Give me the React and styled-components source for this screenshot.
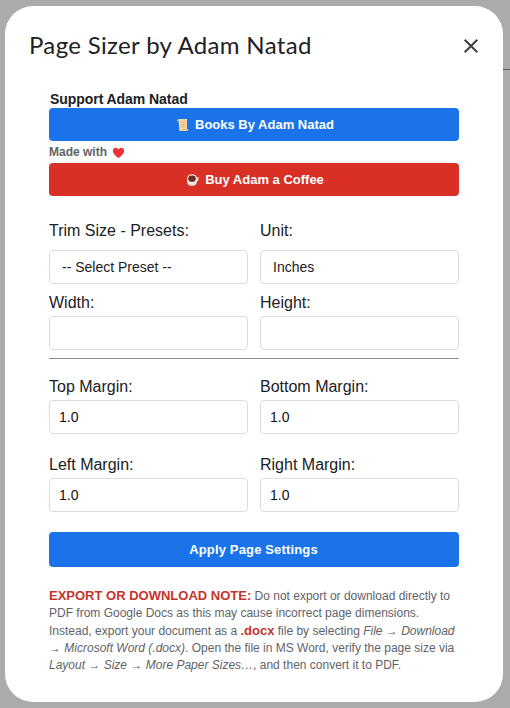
import React from 'react';
import styled, { createGlobalStyle } from 'styled-components';

const GlobalStyle = createGlobalStyle`
  * { box-sizing: border-box; }
  body { margin: 0; background: #ababab; font-family: "Liberation Sans", Arial, sans-serif; }
`;

const Backdrop = styled.div`
  width: 510px;
  height: 708px;
  padding: 6px 7px 6px 5px;
  overflow: hidden;
  background: linear-gradient(#5e5e5e, #5e5e5e) 503px 69px / 7px 1px no-repeat #ababab;
`;

const Dialog = styled.main`
  width: 498px;
  height: 696px;
  border-radius: 28px;
  background: #fff;
  color: #202124;
`;

const Header = styled.header`
  display: flex;
  align-items: center;
  justify-content: space-between;
  height: 80px;
  padding: 0 22px 0 24px;
`;

const Title = styled.h1`
  margin: 0;
  padding-bottom: 2px;
  font: 400 24px/32px Lato, sans-serif;
  letter-spacing: 0.34px;
  white-space: nowrap;
`;

const CloseButton = styled.button`
  display: flex;
  padding: 0;
  border: 0;
  background: none;
  color: #3c4043;
`;

const Content = styled.div`
  width: 410px;
  margin-left: 44px;
`;

const Support = styled.h2`
  margin: 0;
  height: 22px;
  padding: 5px 0 0 1px;
  font-size: 14px;
  line-height: 16px;
  letter-spacing: -0.06px;
`;

const Button = styled.button`
  display: flex;
  align-items: center;
  justify-content: center;
  gap: 6px;
  width: 100%;
  height: ${(p) => p.$height || 33}px;
  padding: ${(p) => (p.$height ? '1px 1px 0 0' : '1px 0 0 2px')};
  border: 0;
  border-radius: 4px;
  background: ${(p) => (p.$danger ? '#d93025' : '#1a73e8')};
  color: #fff;
  font: 700 13px/16px "Liberation Sans", Arial, sans-serif;
  letter-spacing: ${(p) => p.$spacing || 0}px;
`;

const MadeWith = styled.div`
  display: flex;
  align-items: center;
  gap: 5px;
  height: 22px;
  color: #5f6368;
  font-size: 12px;
  font-weight: 700;
`;

const FieldGrid = styled.div`
  display: grid;
  grid-template-columns: 199px 199px;
  column-gap: 12px;
  row-gap: ${(p) => p.$gap}px;
  margin-top: ${(p) => p.$top}px;
`;

const Field = styled.label`
  display: flex;
  flex-direction: column;
  gap: ${(p) => p.$gap || 3}px;
`;

const Label = styled.span`
  height: 20px;
  font-size: 16px;
  line-height: 20px;
  white-space: nowrap;
`;

const control = `
  width: 100%;
  height: 34px;
  margin: 0;
  border: 1px solid #dadce0;
  border-radius: 4px;
  background: #fff;
  font: 14px/16px "Liberation Sans", Arial, sans-serif;
`;

const Input = styled.input`
  ${control}
  padding: 0 8px 0 9px;
  color: #111;
`;

const Select = styled.select`
  ${control}
  appearance: none;
  padding: 0 12px;
  color: #202124;
`;

const Divider = styled.hr`
  height: 1px;
  margin: 8px 0 0;
  border: 0;
  background: #8b8b8b;
`;

const ApplyRow = styled.div`
  margin-top: 20px;
`;

const Note = styled.p`
  margin: 21px 0 0;
  color: #5f6368;
  font-size: 12px;
  line-height: 17px;
`;

const Line = styled.span`
  display: block;
  height: 17.25px;
  white-space: nowrap;
`;

const Strong = styled.strong`
  color: #c5352b;
  font-size: 13px;
  line-height: 0;
`;

const CloseIcon = () => (
  <svg width="20" height="20" viewBox="0 0 20 20" fill="none" stroke="currentColor" strokeWidth="2">
    <path d="M3.7 3.7l12.6 12.6M16.3 3.7l-12.6 12.6" />
  </svg>
);

const ScrollIcon = () => (
  <svg width="13" height="14" viewBox="0 0 13 14">
    <path d="M2.5 1h8.5v11.5H3.2z" fill="#fbd9ab" />
    <path d="M.8 2.4C.8.7 3.2.7 3.2 2.4v.8H.8z" fill="#dcb285" />
    <path d="M3 11h9.200c.3 1.300-.3 2-1.400 2H4c-.8 0-1-.8-1-2z" fill="#efc48e" />
    <path d="M4.500 4h4.800M4.500 6.300h4.800M4.500 8.600h4.800" stroke="#e0a565" strokeWidth="0.9" />
  </svg>
);

const CoffeeIcon = () => (
  <svg width="13" height="14" viewBox="0 0 13 14">
    <path d="M10.300 4.500c2.600-.8 2.400 3.500-.7 4.200" fill="none" stroke="#eed9d6" strokeWidth="1.3" />
    <ellipse cx="6" cy="9.8" rx="5" ry="3.3" fill="#d8aaa6" />
    <path d="M1 5.800c0 4 1.700 6.500 5 6.500s5-2.500 5-6.500z" fill="#f4e4e1" />
    <ellipse cx="6" cy="5.8" rx="5" ry="4.6" fill="#f6e9e5" />
    <ellipse cx="6" cy="5.7" rx="3.8" ry="3.1" fill="#5f2f25" />
  </svg>
);

const HeartIcon = () => (
  <svg width="13" height="13" viewBox="0 0 14 13">
    <path d="M7 12.500C4.800 11 .9 7.700.9 4.600.9 1 5.400.4 7 3.200 8.600.4 13.100 1 13.100 4.600 13.100 7.700 9.200 11 7 12.500z" fill="#ee3037" />
  </svg>
);

const margins = ['Top Margin:', 'Bottom Margin:', 'Left Margin:', 'Right Margin:'];

export default function App() {
  return (
    <Backdrop>
      <GlobalStyle />
      <Dialog>
        <Header>
          <Title>Page Sizer by Adam Natad</Title>
          <CloseButton aria-label="Close"><CloseIcon /></CloseButton>
        </Header>
        <Content>
          <Support>Support Adam Natad</Support>
          <Button><ScrollIcon />Books By Adam Natad</Button>
          <MadeWith>Made with <HeartIcon /></MadeWith>
          <Button $danger><CoffeeIcon />Buy Adam a Coffee</Button>
          <FieldGrid $top={25} $gap={9}>
            <Field $gap={9}>
              <Label>Trim Size - Presets:</Label>
              <Select><option>-- Select Preset --</option></Select>
            </Field>
            <Field $gap={9}>
              <Label>Unit:</Label>
              <Select><option>Inches</option></Select>
            </Field>
            <Field><Label>Width:</Label><Input /></Field>
            <Field><Label>Height:</Label><Input /></Field>
          </FieldGrid>
          <Divider />
          <FieldGrid $top={18} $gap={21}>
            {margins.map((name) => (
              <Field key={name}><Label>{name}</Label><Input defaultValue="1.0" /></Field>
            ))}
          </FieldGrid>
          <ApplyRow><Button $height={35} $spacing={0.15}>Apply Page Settings</Button></ApplyRow>
          <Note>
            <Line><Strong>EXPORT OR DOWNLOAD NOTE:</Strong> Do not export or download directly to</Line>
            <Line>PDF from Google Docs as this may cause incorrect page dimensions.</Line>
            <Line>Instead, export your document as a <Strong>.docx</Strong> file by selecting <em>File → Download</em></Line>
            <Line><em>→ Microsoft Word (.docx)</em>. Open the file in MS Word, verify the page size via</Line>
            <Line><em>Layout → Size → More Paper Sizes…</em>, and then convert it to PDF.</Line>
          </Note>
        </Content>
      </Dialog>
    </Backdrop>
  );
}
